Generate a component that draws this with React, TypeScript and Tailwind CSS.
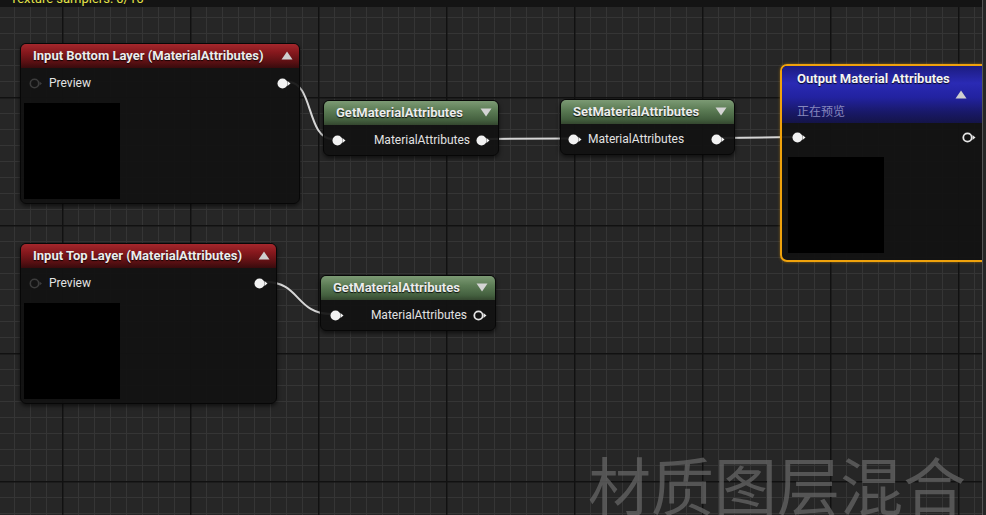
import React from "react";

function Pin({ kind }: { kind: "filled" | "hollow" | "dim" }) {
  if (kind === "filled") {
    return (
      <svg width="14" height="11" viewBox="0 0 14 11" className="shrink-0">
        <circle cx="5.5" cy="5.5" r="5" fill="#f2f2f2" />
        <polygon points="10.5,3 13.5,5.5 10.5,8" fill="#f2f2f2" />
      </svg>
    );
  }
  if (kind === "hollow") {
    return (
      <svg width="14" height="11" viewBox="0 0 14 11" className="shrink-0">
        <circle cx="5.5" cy="5.5" r="4.2" fill="none" stroke="#e6e6e6" strokeWidth="1.8" />
        <polygon points="10.5,3 13.5,5.5 10.5,8" fill="#e6e6e6" />
      </svg>
    );
  }
  return (
    <svg width="14" height="11" viewBox="0 0 14 11" className="shrink-0">
      <circle cx="5.5" cy="5.5" r="4.2" fill="#141414" stroke="#3c3c3c" strokeWidth="1.6" />
      <polygon points="10.5,3.5 13,5.5 10.5,7.5" fill="#3c3c3c" />
    </svg>
  );
}

function TriUp() {
  return (
    <svg width="12" height="9" viewBox="0 0 12 9" className="shrink-0">
      <polygon points="6,0.5 11.5,8.5 0.5,8.5" fill="#cfcfcf" />
    </svg>
  );
}

function TriDown() {
  return (
    <svg width="12" height="9" viewBox="0 0 12 9" className="shrink-0">
      <polygon points="0.5,0.5 11.5,0.5 6,8.5" fill="#d4d4d4" />
    </svg>
  );
}

const title =
  "font-['Roboto',sans-serif] font-bold text-[13px] leading-none text-[#ececec] [text-shadow:0_1px_1px_rgba(0,0,0,0.85)] whitespace-nowrap";
const label =
  "font-['Roboto',sans-serif] text-[12px] leading-none text-[#e2e2e2] whitespace-nowrap";

const redHeader =
  "bg-[linear-gradient(180deg,#a4272c_0%,#86181d_35%,#5a1013_75%,#380b0d_100%)]";
const greenHeader =
  "bg-[linear-gradient(180deg,#7c9a74_0%,#5c7c55_40%,#44603f_80%,#34472f_100%)]";
const body = "bg-[#121212]/[0.93]";

export default function App() {
  return (
    <div className="relative w-[986px] h-[515px] overflow-hidden bg-[#262626]">
      {/* grid + wires */}
      <svg className="absolute inset-0" width="986" height="515">
        <defs>
          <pattern id="minor" x="14" y="1" width="16" height="16" patternUnits="userSpaceOnUse">
            <rect x="0" y="0" width="1" height="16" fill="#353535" />
            <rect x="0" y="0" width="16" height="1" fill="#353535" />
          </pattern>
          <pattern id="major" x="62" y="97" width="128" height="128" patternUnits="userSpaceOnUse">
            <rect x="0" y="0" width="1.5" height="128" fill="#111111" />
            <rect x="0" y="0" width="128" height="1.5" fill="#111111" />
          </pattern>
        </defs>
        <rect width="986" height="515" fill="url(#minor)" />
        <rect width="986" height="515" fill="url(#major)" />
        <g fill="none" stroke="#d6d6d6" strokeWidth="2" strokeLinecap="round">
          <path d="M288 82 C314 82 306 139 333 139" />
          <path d="M487 139 L569 138.5" />
          <path d="M721 138 L793 137" />
          <path d="M266 282 C300 282 296 314 331 314" />
        </g>
      </svg>

      {/* top info bar */}
      <div className="relative h-[7px] bg-[#141414] overflow-hidden">
        <div className="mt-[-8px] ml-[10px] font-['Roboto',sans-serif] text-[13px] leading-[14px] text-[#e4e448] whitespace-nowrap">
          Texture samplers: 0/16
        </div>
      </div>

      {/* Node 1: Input Bottom Layer */}
      <div className={`absolute left-[20px] top-[43px] w-[280px] h-[161px] rounded-[6px] border border-[#070707] ${body} shadow-[0_2px_4px_rgba(0,0,0,0.6)] overflow-hidden flex flex-col`}>
        <div className={`h-[24px] shrink-0 flex items-center justify-between pl-[12px] pr-[6px] pb-[2px] ${redHeader}`}>
          <span className={title}>Input Bottom Layer (MaterialAttributes)</span>
          <TriUp />
        </div>
        <div className="h-[30px] shrink-0 flex items-center justify-between pl-[8px] pr-[8px]">
          <div className="flex items-center gap-[6px]">
            <Pin kind="dim" />
            <span className={label}>Preview</span>
          </div>
          <Pin kind="filled" />
        </div>
        <div className="ml-[3px] mt-[5px] w-[96px] h-[96px] bg-black" />
      </div>

      {/* Node 2: Input Top Layer */}
      <div className={`absolute left-[20px] top-[243px] w-[257px] h-[161px] rounded-[6px] border border-[#070707] ${body} shadow-[0_2px_4px_rgba(0,0,0,0.6)] overflow-hidden flex flex-col`}>
        <div className={`h-[24px] shrink-0 flex items-center justify-between pl-[12px] pr-[6px] pb-[2px] ${redHeader}`}>
          <span className={title}>Input Top Layer (MaterialAttributes)</span>
          <TriUp />
        </div>
        <div className="h-[30px] shrink-0 flex items-center justify-between pl-[8px] pr-[8px]">
          <div className="flex items-center gap-[6px]">
            <Pin kind="dim" />
            <span className={label}>Preview</span>
          </div>
          <Pin kind="filled" />
        </div>
        <div className="ml-[3px] mt-[5px] w-[96px] h-[96px] bg-black" />
      </div>

      {/* Node 3: GetMaterialAttributes */}
      <div className={`absolute left-[323px] top-[100px] w-[176px] h-[56px] rounded-[6px] border border-[#070707] ${body} shadow-[0_2px_4px_rgba(0,0,0,0.6)] overflow-hidden flex flex-col`}>
        <div className={`h-[24px] shrink-0 flex items-center justify-between pl-[12px] pr-[6px] pb-[2px] ${greenHeader}`}>
          <span className={title}>GetMaterialAttributes</span>
          <TriDown />
        </div>
        <div className="flex-1 flex items-center justify-between pl-[8px] pr-[8px]">
          <Pin kind="filled" />
          <div className="flex items-center gap-[6px]">
            <span className={label}>MaterialAttributes</span>
            <Pin kind="filled" />
          </div>
        </div>
      </div>

      {/* Node 4: SetMaterialAttributes */}
      <div className={`absolute left-[560px] top-[99px] w-[175px] h-[56px] rounded-[6px] border border-[#070707] ${body} shadow-[0_2px_4px_rgba(0,0,0,0.6)] overflow-hidden flex flex-col`}>
        <div className={`h-[24px] shrink-0 flex items-center justify-between pl-[12px] pr-[7px] pb-[2px] ${greenHeader}`}>
          <span className={title}>SetMaterialAttributes</span>
          <TriDown />
        </div>
        <div className="flex-1 flex items-center justify-between pl-[7px] pr-[9px]">
          <div className="flex items-center gap-[6px]">
            <Pin kind="filled" />
            <span className={label}>MaterialAttributes</span>
          </div>
          <Pin kind="filled" />
        </div>
      </div>

      {/* Node 5: GetMaterialAttributes (2) */}
      <div className={`absolute left-[320px] top-[275px] w-[176px] h-[56px] rounded-[6px] border border-[#070707] ${body} shadow-[0_2px_4px_rgba(0,0,0,0.6)] overflow-hidden flex flex-col`}>
        <div className={`h-[24px] shrink-0 flex items-center justify-between pl-[12px] pr-[7px] pb-[2px] ${greenHeader}`}>
          <span className={title}>GetMaterialAttributes</span>
          <TriDown />
        </div>
        <div className="flex-1 flex items-center justify-between pl-[9px] pr-[8px]">
          <Pin kind="filled" />
          <div className="flex items-center gap-[6px]">
            <span className={label}>MaterialAttributes</span>
            <Pin kind="hollow" />
          </div>
        </div>
      </div>

      {/* Node 6: Output Material Attributes (selected) */}
      <div className="absolute left-[780px] top-[64px] w-[212px] h-[198px] rounded-[7px] border-2 border-[#efa20c] bg-[#121212]/[0.93] shadow-[0_0_3px_rgba(239,162,12,0.5)] overflow-hidden flex flex-col">
        <div className="h-[57px] shrink-0 flex flex-col pl-[15px] pr-[14px] pt-[6px] bg-[linear-gradient(180deg,#1c1c80_0%,#2a2ab4_30%,#2222a0_55%,#19196a_80%,#141448_100%)]">
          <span className={`${title} text-[#f4f4f4]`}>Output Material Attributes</span>
          <div className="flex justify-end mt-[5px] pr-[9px]">
            <TriUp />
          </div>
          <span className="mt-[6px] font-['Noto_Sans_CJK_SC',sans-serif] text-[12px] leading-none text-[#8787bd]">正在预览</span>
        </div>
        <div className="h-[28px] shrink-0 flex items-center justify-between pl-[10px] pr-[14px]">
          <Pin kind="filled" />
          <Pin kind="hollow" />
        </div>
        <div className="ml-[6px] mt-[6px] w-[96px] h-[96px] bg-black" />
      </div>

      {/* watermark */}
      <div className="absolute left-[588px] top-[451px] font-['Noto_Sans_CJK_SC',sans-serif] text-[63px] leading-none text-[#666666]/[0.75] whitespace-nowrap">
        材质图层混合
      </div>

      {/* right edge strip */}
      <div className="absolute left-[982px] top-0 w-[1px] h-[515px] bg-[#555555]" />
      <div className="absolute left-[983px] top-0 w-[3px] h-[515px] bg-[#262626]" />
    </div>
  );
}
